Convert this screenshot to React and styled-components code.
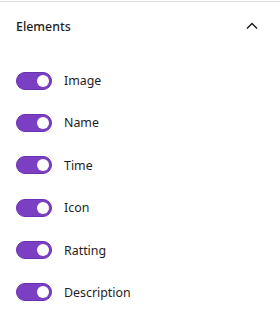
import React, { useState } from 'react'
import styled, { createGlobalStyle } from 'styled-components'

const GlobalStyle = createGlobalStyle`
  body {
    margin: 0;
    background: #fff;
    font-family: 'Noto Sans', 'Open Sans', sans-serif;
    color: #1e1e1e;
  }
`

const Panel = styled.section`
  margin-top: 1px;
  border-top: 1px solid #e0e0e0;
  width: 280px;
`

const Header = styled.div`
  display: flex;
  align-items: center;
  justify-content: space-between;
  padding: 12px 16px 0 16px;
  height: 24px;
`

const Title = styled.h2`
  margin: 0;
  font-size: 12.4px;
  font-weight: 500;
  color: #1e1e1e;
`

const Collapse = styled.button`
  display: flex;
  align-items: center;
  justify-content: center;
  width: 24px;
  height: 24px;
  padding: 0;
  border: none;
  background: none;
  cursor: pointer;
`

const List = styled.div`
  display: flex;
  flex-direction: column;
  gap: 18.4px;
  padding: 30.5px 16px 0 16px;
`

const Row = styled.label`
  display: flex;
  align-items: center;
  gap: 12px;
  height: 24px;
  font-size: 12.4px;
  color: #1e1e1e;
  cursor: pointer;
`

const Track = styled.span`
  position: relative;
  box-sizing: border-box;
  width: 36px;
  height: 18px;
  border-radius: 9px;
  background: ${(p) => (p.$on ? '#7b3fc4' : '#fff')};
  border: 1px solid ${(p) => (p.$on ? '#6a32b0' : '#1e1e1e')};
  flex-shrink: 0;
`

const Knob = styled.span`
  position: absolute;
  top: 2px;
  left: ${(p) => (p.$on ? '20px' : '2px')};
  width: 12px;
  height: 12px;
  border-radius: 50%;
  background: ${(p) => (p.$on ? '#fff' : '#1e1e1e')};
`

const items = ['Image', 'Name', 'Time', 'Icon', 'Ratting', 'Description']

function App() {
  const [state, setState] = useState(items.map(() => true))

  const toggle = (i) => setState(state.map((v, j) => (j === i ? !v : v)))

  return (
    <>
      <GlobalStyle />
      <Panel>
        <Header>
          <Title>Elements</Title>
          <Collapse aria-label="Collapse">
            <svg width="24" height="24" viewBox="0 0 24 24">
              <path d="M7 14.5l5-5 5 5" fill="none" stroke="#1e1e1e" strokeWidth="1.5" />
            </svg>
          </Collapse>
        </Header>
        <List>
          {items.map((name, i) => (
            <Row key={name} onClick={() => toggle(i)}>
              <Track $on={state[i]}>
                <Knob $on={state[i]} />
              </Track>
              {name}
            </Row>
          ))}
        </List>
      </Panel>
    </>
  )
}

export default App
